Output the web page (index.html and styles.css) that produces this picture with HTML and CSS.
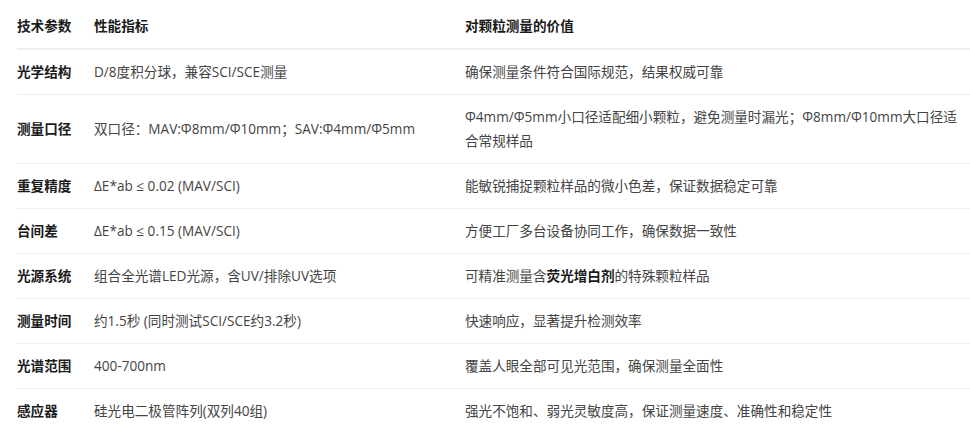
FILE: index.html
```html
<!DOCTYPE html>
<html lang="zh-CN">
<head>
<meta charset="utf-8">
<link rel="stylesheet" href="styles.css">
</head>
<body>
<table class="spec">
  <colgroup>
    <col class="c1"><col class="c2"><col class="c3">
  </colgroup>
  <thead>
    <tr><th>技术参数</th><th>性能指标</th><th>对颗粒测量的价值</th></tr>
  </thead>
  <tbody>
    <tr><td class="k">光学结构</td><td>D/8度积分球，兼容SCI/SCE测量</td><td>确保测量条件符合国际规范，结果权威可靠</td></tr>
    <tr><td class="k">测量口径</td><td>双口径：MAV:Φ8mm/Φ10mm；SAV:Φ4mm/Φ5mm</td><td>Φ4mm/Φ5mm小口径适配细小颗粒，避免测量时漏光；Φ8mm/Φ10mm大口径适合常规样品</td></tr>
    <tr><td class="k">重复精度</td><td>ΔE*ab ≤ 0.02 (MAV/SCI)</td><td>能敏锐捕捉颗粒样品的微小色差，保证数据稳定可靠</td></tr>
    <tr><td class="k">台间差</td><td>ΔE*ab ≤ 0.15 (MAV/SCI)</td><td>方便工厂多台设备协同工作，确保数据一致性</td></tr>
    <tr><td class="k">光源系统</td><td>组合全光谱LED光源，含UV/排除UV选项</td><td>可精准测量含<strong>荧光增白剂</strong>的特殊颗粒样品</td></tr>
    <tr><td class="k">测量时间</td><td>约1.5秒 (同时测试SCI/SCE约3.2秒)</td><td>快速响应，显著提升检测效率</td></tr>
    <tr><td class="k">光谱范围</td><td>400-700nm</td><td>覆盖人眼全部可见光范围，确保测量全面性</td></tr>
    <tr><td class="k">感应器</td><td>硅光电二极管阵列(双列40组)</td><td>强光不饱和、弱光灵敏度高，保证测量速度、准确性和稳定性</td></tr>
  </tbody>
</table>
</body>
</html>
```
FILE: styles.css
```css
html, body {
  margin: 0;
  padding: 0;
  background: #fff;
}
body {
  font-family: "Open Sans", "Noto Sans CJK SC", sans-serif;
  font-size: 13.6px;
  color: #444;
  overflow: hidden;
}
.spec {
  margin-left: 17px;
  width: 953px;
  border-collapse: collapse;
  table-layout: fixed;
}
.c1 { width: 77px; }
.c2 { width: 371px; }
.c3 { width: 505px; }
.spec th, .spec td {
  text-align: left;
  vertical-align: middle;
  line-height: 24px;
  padding: 10px 14px 10px 0;
}
.spec th:last-child, .spec td:last-child {
  padding-right: 2px;
}
.spec th {
  font-weight: 700;
  color: #1a1a1a;
  padding-top: 14px;
  padding-bottom: 10px;
  border-bottom: 2px solid #eeeeee;
}
.spec td {
  border-bottom: 1px solid #eeeeee;
}
.spec tbody tr:last-child td {
  border-bottom: none;
}
.spec td.k {
  font-weight: 700;
  color: #1a1a1a;
}
.spec strong {
  font-weight: 700;
  color: #1a1a1a;
}
```
